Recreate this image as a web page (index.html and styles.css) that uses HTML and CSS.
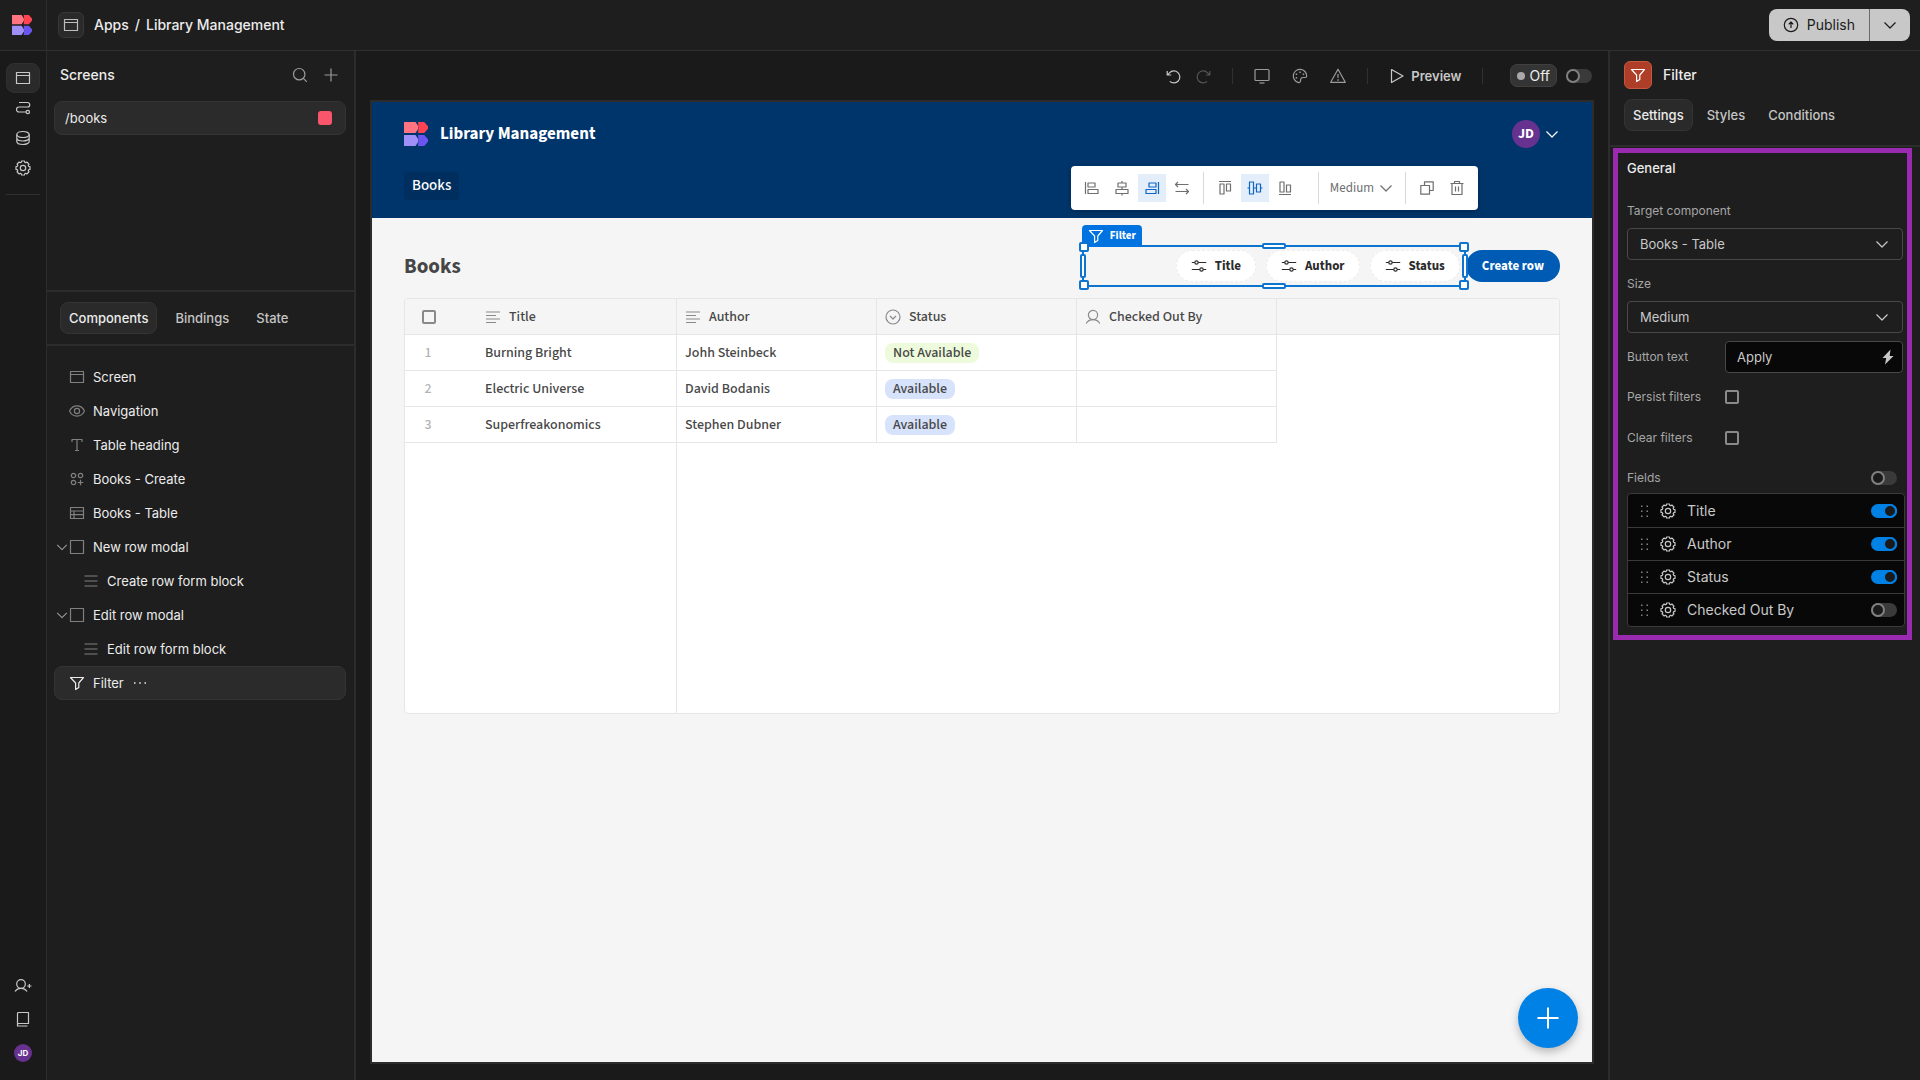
FILE: index.html
```html
<!DOCTYPE html>
<html lang="en">
<head>
    <meta charset="UTF-8">
    <meta name="viewport" content="width=device-width, initial-scale=1.0">
    <title>Library Management - Builder</title>
    <link rel="stylesheet" href="styles.css">
</head>
<body>
    <!-- icon sprite -->
    <svg class="sprite" aria-hidden="true">
        <symbol id="logo" viewBox="0 0 24 24">
            <path fill="#ff7480" d="M0 0h11.5l2.8 4.2v2.6L11.5 11H0z"/>
            <path fill="#ff4350" d="M14 0h6.2L24 4.2v2.6L20.2 11H14l.6-5.5z"/>
            <path fill="#9f90f8" d="M0 13h11.5l2.8 4.2v2.6L11.5 24H0z"/>
            <path fill="#6a55f0" d="M14 13h6.2l3.8 4.2v2.6L20.2 24H14l.6-5.5z"/>
        </symbol>
        <symbol id="browser" viewBox="0 0 16 16"><path d="M1.5 2.5h13v11h-13zM1.5 5.5h13"/></symbol>
        <symbol id="path" viewBox="0 0 16 16"><circle cx="12.8" cy="12" r="1.7"/><path d="M11 12H4a2.3 2.3 0 0 1 0-5h8.5a2.2 2.2 0 0 0 0-4.5H4"/></symbol>
        <symbol id="database" viewBox="0 0 16 16"><ellipse cx="8" cy="4.5" rx="6.2" ry="3"/><path d="M1.8 4.500v7c0 1.700 2.800 3 6.200 3s6.200-1.300 6.200-3v-7M1.800 8c0 1.700 2.800 3 6.200 3s6.200-1.300 6.200-3"/></symbol>
        <symbol id="gear" viewBox="0 0 16 16"><circle cx="8" cy="8" r="2.7"/><path d="M15 6.5v3l-1.300.2-.5 1.100.8 1.100-2.100 2.100-1.100-.8-1.100.5-.2 1.300h-3l-.2-1.300-1.100-.5-1.100.8L2 11.900l.8-1.100-.5-1.100L1 9.500v-3l1.300-.2.500-1.100L2 4.100 4.100 2l1.100.8 1.100-.5L6.500 1h3l.2 1.300 1.100.5 1.100-.8L14 4.100l-.8 1.100.5 1.100z"/></symbol>
        <symbol id="search" viewBox="0 0 16 16"><circle cx="7.2" cy="7.2" r="5.7"/><path d="m11.3 11.3 3.500 3.500"/></symbol>
        <symbol id="plus" viewBox="0 0 16 16"><path d="M8 1.500v13M1.500 8h13"/></symbol>
        <symbol id="eye" viewBox="0 0 16 16"><path d="M.5 8S3 2.800 8 2.800 15.500 8 15.500 8 13 13.200 8 13.200.5 8 .5 8z"/><circle cx="8" cy="8" r="2.6"/></symbol>
        <symbol id="text" viewBox="0 0 16 16"><path d="M3 5V2.500h10V5M8 2.500v11M6 13.500h4"/></symbol>
        <symbol id="grid-plus" viewBox="0 0 16 16"><circle cx="4.5" cy="4.5" r="2.2"/><circle cx="11.5" cy="4.5" r="2.2"/><circle cx="4.5" cy="11.5" r="2.2"/><path d="M11.500 8.700v5.600M8.700 11.500h5.600"/></symbol>
        <symbol id="table" viewBox="0 0 16 16"><path d="M1.500 2.500h13v11h-13zM1.500 6h13M1.500 9.700h13M5 6v7.500"/></symbol>
        <symbol id="square" viewBox="0 0 16 16"><path d="M1.500 1.500h13v13h-13z"/></symbol>
        <symbol id="list" viewBox="0 0 16 16"><path d="M1.500 3h13M1.500 8h13M1.500 13h13"/></symbol>
        <symbol id="funnel" viewBox="0 0 16 16"><path d="M1.500 2.500h13L9.800 8v4.500l-3.200 2V8z"/></symbol>
        <symbol id="chevron" viewBox="0 0 16 16"><path d="m2.500 5.500 5.500 5.500 5.500-5.500"/></symbol>
        <symbol id="dots" viewBox="0 0 16 16"><path class="solid" d="M2 7.300h1.500v1.500H2zM7.300 7.300h1.500v1.500H7.300zM12.500 7.300H14v1.500h-1.500z"/></symbol>
        <symbol id="user-plus" viewBox="0 0 18 16"><circle cx="7" cy="6" r="4.3"/><path d="M1 13.500c1.200-2 3.400-3.200 6-3.200s4.800 1.200 6 3.200M13.300 8h4.200M15.400 5.900v4.200"/></symbol>
        <symbol id="user" viewBox="0 0 16 16"><circle cx="8" cy="6" r="4.6"/><path d="M1.200 14.500c1.200-2.400 3.800-3.900 6.800-3.900s5.600 1.500 6.800 3.900"/></symbol>
        <symbol id="book" viewBox="0 0 16 16"><path d="M2.500 14V2.500a1 1 0 0 1 1-1h10v11h-10a1 1 0 0 0-1 1v1.500h10"/></symbol>
        <symbol id="publish" viewBox="0 0 16 16"><circle cx="8" cy="8" r="6.7"/><path d="M8 11V5.200M5.700 7.300 8 5l2.300 2.300"/></symbol>
        <symbol id="undo" viewBox="0 0 16 16"><path d="M1.200 3v4h4M1.500 6.800l2-2a6 6 0 1 1 .3 8.600"/></symbol>
        <symbol id="redo" viewBox="0 0 16 16"><path d="M14.800 3v4h-4M14.500 6.800l-2-2a6 6 0 1 0-.3 8.600"/></symbol>
        <symbol id="monitor" viewBox="0 0 16 16"><rect x="1" y="1.5" width="14" height="11" rx="1"/><path d="M5.500 15h5"/></symbol>
        <symbol id="palette" viewBox="0 0 16 16"><path d="M9 10.500c.5-.8 1.400-1 2.500-1h1.800c1 0 1.400-.7 1.400-1.500A6.700 6.700 0 1 0 6 14.400c1.500.5 2.600-.4 2.600-1.600 0-.9 0-1.600.4-2.300z"/><path class="solid" d="M7.300 3.500h1.500V5H7.300zM3.700 5.500h1.500V7H3.700zM3.700 9h1.500v1.500H3.700zM10.700 5.500h1.500V7h-1.500z"/></symbol>
        <symbol id="warning" viewBox="0 0 16 16"><path d="M8 1.200 15.300 14.300H.7zM8 6v4"/><path class="solid" d="M7.300 11.300h1.500v1.400H7.300z"/></symbol>
        <symbol id="play" viewBox="0 0 16 16"><path d="M2.500 1.500 14 8 2.500 14.500z"/></symbol>
        <symbol id="h-left" viewBox="0 0 16 16"><path d="M1.500 2v12M4 3h7v4H4zM4 9.500h10v4H4z"/></symbol>
        <symbol id="h-center" viewBox="0 0 16 16"><path d="M8 1v2M8 7v2.500M8 13.500v2M4 3h8v4H4zM2 9.500h12v4H2z"/></symbol>
        <symbol id="h-right" viewBox="0 0 16 16"><path d="M14.500 2v12M5 3h7v4H5zM2 9.500h10v4H2z"/></symbol>
        <symbol id="swap" viewBox="0 0 16 16"><path d="M14.500 4.500h-13M4 2 1.500 4.500 4 7M1.500 11.500h13M12 9l2.500 2.500L12 14"/></symbol>
        <symbol id="v-top" viewBox="0 0 16 16"><path d="M2 1.500h12M3 4h4v10H3zM9.500 4h4v7h-4z"/></symbol>
        <symbol id="v-center" viewBox="0 0 16 16"><path d="M.5 8H2M6.500 8H9M14 8h1.500M2.500 2h4v12h-4zM9.500 4h4v8h-4z"/></symbol>
        <symbol id="v-bottom" viewBox="0 0 16 16"><path d="M2 14.500h12M3 2h4v10H3zM9.500 5h4v7h-4z"/></symbol>
        <symbol id="copy" viewBox="0 0 16 16"><path d="M5.500 5V1.800h8.700v8.700H10.500M1.800 5.500h8.700v8.700H1.800z"/></symbol>
        <symbol id="trash" viewBox="0 0 16 16"><path d="M1.500 3.500h13M3 3.500v11h10v-11M5.500 3.500v-2h5v2M6.500 6.500v5M9.500 6.500v5"/></symbol>
        <symbol id="sliders" viewBox="0 0 16 16"><circle cx="5.5" cy="4.5" r="1.7"/><circle cx="10.5" cy="11.5" r="1.7"/><path d="M.8 4.500h3M7.200 4.500h8M.8 11.500h8M12.200 11.500h3"/></symbol>
        <symbol id="align-left" viewBox="0 0 16 16"><path d="M1 3h14M1 6.500h10M1 10h14M1 13.500h10"/></symbol>
        <symbol id="circle-down" viewBox="0 0 16 16"><circle cx="8" cy="8" r="7"/><path d="M5 7l3 3 3-3"/></symbol>
        <symbol id="bolt" viewBox="0 0 16 16"><path class="solid" d="M10.500.5 2.500 9h3.700L5 15.500 13.500 7H9.700z"/></symbol>
        <symbol id="grip" viewBox="0 0 10 14"><path class="solid" d="M1 1.500h1.500V3H1zM6.500 1.500H8V3H6.500zM1 6.500h1.500V8H1zM6.500 6.500H8V8H6.500zM1 11.500h1.500V13H1zM6.500 11.500H8V13H6.500z"/></symbol>
    </svg>

    <div class="builder">
        <header class="topbar">
            <a class="topbar-logo" href="#" aria-label="Home"><svg class="logo-sm"><use href="#logo"/></svg></a>
            <span class="app-icon"><svg class="icon"><use href="#browser"/></svg></span>
            <nav class="breadcrumbs">
                <a href="#">Apps</a>
                <span>/</span>
                <a href="#">Library Management</a>
            </nav>
            <div class="publish">
                <button type="button" class="publish-main"><svg class="icon"><use href="#publish"/></svg>Publish</button>
                <button type="button" class="publish-more" aria-label="Publish options"><svg class="icon"><use href="#chevron"/></svg></button>
            </div>
        </header>

        <nav class="rail">
            <a class="rail-link active" href="#" aria-label="Design"><svg class="icon"><use href="#browser"/></svg></a>
            <a class="rail-link" href="#" aria-label="Automations"><svg class="icon"><use href="#path"/></svg></a>
            <a class="rail-link" href="#" aria-label="Data"><svg class="icon"><use href="#database"/></svg></a>
            <a class="rail-link" href="#" aria-label="Settings"><svg class="icon"><use href="#gear"/></svg></a>
            <hr>
            <div class="rail-bottom">
                <a href="#" aria-label="Invite"><svg class="icon icon-wide"><use href="#user-plus"/></svg></a>
                <a href="#" aria-label="Docs"><svg class="icon"><use href="#book"/></svg></a>
                <span class="avatar avatar-sm">JD</span>
            </div>
        </nav>

        <aside class="left-panel">
            <section class="screens">
                <div class="screens-head">
                    <h2>Screens</h2>
                    <button type="button" aria-label="Search"><svg class="icon"><use href="#search"/></svg></button>
                    <button type="button" aria-label="Add screen"><svg class="icon"><use href="#plus"/></svg></button>
                </div>
                <a class="screen-row" href="#">/books<span class="role"></span></a>
            </section>
            <div class="tabs left-tabs">
                <button type="button" class="tab active">Components</button>
                <button type="button" class="tab">Bindings</button>
                <button type="button" class="tab">State</button>
            </div>
            <ul class="tree">
                <li><svg class="icon"><use href="#browser"/></svg>Screen</li>
                <li><svg class="icon"><use href="#eye"/></svg>Navigation</li>
                <li><svg class="icon"><use href="#text"/></svg>Table heading</li>
                <li><svg class="icon"><use href="#grid-plus"/></svg>Books - Create</li>
                <li><svg class="icon"><use href="#table"/></svg>Books - Table</li>
                <li class="parent"><svg class="icon caret"><use href="#chevron"/></svg><svg class="icon"><use href="#square"/></svg>New row modal</li>
                <li class="child"><svg class="icon"><use href="#list"/></svg>Create row form block</li>
                <li class="parent"><svg class="icon caret"><use href="#chevron"/></svg><svg class="icon"><use href="#square"/></svg>Edit row modal</li>
                <li class="child"><svg class="icon"><use href="#list"/></svg>Edit row form block</li>
                <li class="selected"><svg class="icon"><use href="#funnel"/></svg>Filter<svg class="icon"><use href="#dots"/></svg></li>
            </ul>
        </aside>

        <main class="stage">
            <div class="stage-bar">
                <button type="button" class="bright" aria-label="Undo"><svg class="icon"><use href="#undo"/></svg></button>
                <button type="button" class="dim" aria-label="Redo"><svg class="icon"><use href="#redo"/></svg></button>
                <span class="sep"></span>
                <button type="button" class="device" aria-label="Device"><svg class="icon"><use href="#monitor"/></svg></button>
                <button type="button" class="device" aria-label="Theme"><svg class="icon"><use href="#palette"/></svg></button>
                <button type="button" class="device" aria-label="Errors"><svg class="icon"><use href="#warning"/></svg></button>
                <span class="sep"></span>
                <button type="button" class="preview"><svg class="icon"><use href="#play"/></svg>Preview</button>
                <span class="sep"></span>
                <label class="off-badge" for="live">Off</label>
                <input type="checkbox" class="switch" id="live">
            </div>

            <div class="canvas">
                <header class="app-nav">
                    <div class="app-brand">
                        <svg class="logo-lg"><use href="#logo"/></svg>
                        <h1>Library Management</h1>
                        <span class="avatar">JD</span>
                        <svg class="icon"><use href="#chevron"/></svg>
                    </div>
                    <a class="app-link" href="#">Books</a>
                </header>

                <div class="app-body">
                    <div class="heading-row">
                        <h2>Books</h2>
                        <div class="filter-block">
                            <button type="button" class="pill"><svg class="icon"><use href="#sliders"/></svg>Title</button>
                            <button type="button" class="pill"><svg class="icon"><use href="#sliders"/></svg>Author</button>
                            <button type="button" class="pill"><svg class="icon"><use href="#sliders"/></svg>Status</button>
                            <!-- selection overlay -->
                            <div class="selection">
                                <span class="selection-tag"><svg class="icon"><use href="#funnel"/></svg>Filter</span>
                                <i class="corner top left"></i><i class="corner top right"></i>
                                <i class="corner bottom left"></i><i class="corner bottom right"></i>
                                <i class="bar-h top"></i><i class="bar-h bottom"></i>
                                <i class="bar-v left"></i><i class="bar-v right"></i>
                            </div>
                        </div>
                        <button type="button" class="create-row">Create row</button>
                    </div>

                    <div class="grid-wrap">
                        <table class="grid">
                            <colgroup><col class="col-num"><col class="col-data"><col class="col-data"><col class="col-data"><col class="col-data"><col></colgroup>
                            <thead>
                                <tr>
                                    <th class="num"><input type="checkbox" class="check" aria-label="Select all"></th>
                                    <th><span class="th"><svg class="icon"><use href="#align-left"/></svg>Title</span></th>
                                    <th><span class="th"><svg class="icon"><use href="#align-left"/></svg>Author</span></th>
                                    <th><span class="th"><svg class="icon"><use href="#circle-down"/></svg>Status</span></th>
                                    <th><span class="th"><svg class="icon"><use href="#user"/></svg>Checked Out By</span></th>
                                    <th></th>
                                </tr>
                            </thead>
                            <tbody>
                                <tr><td class="num">1</td><td>Burning Bright</td><td>Johh Steinbeck</td><td><span class="status green">Not Available</span></td><td></td><td class="rest"></td></tr>
                                <tr><td class="num">2</td><td>Electric Universe</td><td>David Bodanis</td><td><span class="status blue">Available</span></td><td></td><td class="rest"></td></tr>
                                <tr><td class="num">3</td><td>Superfreakonomics</td><td>Stephen Dubner</td><td><span class="status blue">Available</span></td><td></td><td class="rest"></td></tr>
                                <tr class="filler"><td></td><td class="line"></td><td colspan="4"></td></tr>
                            </tbody>
                        </table>
                    </div>
                </div>

                <div class="float-bar">
                    <div class="group">
                        <button type="button" aria-label="Align left"><svg class="icon"><use href="#h-left"/></svg></button>
                        <button type="button" aria-label="Align center"><svg class="icon"><use href="#h-center"/></svg></button>
                        <button type="button" class="on" aria-label="Align right"><svg class="icon"><use href="#h-right"/></svg></button>
                        <button type="button" aria-label="Stretch"><svg class="icon"><use href="#swap"/></svg></button>
                    </div>
                    <div class="group group-vertical">
                        <button type="button" aria-label="Align top"><svg class="icon"><use href="#v-top"/></svg></button>
                        <button type="button" class="on" aria-label="Align middle"><svg class="icon"><use href="#v-center"/></svg></button>
                        <button type="button" aria-label="Align bottom"><svg class="icon"><use href="#v-bottom"/></svg></button>
                    </div>
                    <div class="group">
                        <button type="button" class="size">Medium<svg class="icon"><use href="#chevron"/></svg></button>
                    </div>
                    <div class="group">
                        <button type="button" aria-label="Duplicate"><svg class="icon"><use href="#copy"/></svg></button>
                        <button type="button" aria-label="Delete"><svg class="icon"><use href="#trash"/></svg></button>
                    </div>
                </div>
                <button type="button" class="fab" aria-label="Add component"><svg class="icon"><use href="#plus"/></svg></button>
            </div>
        </main>

        <aside class="right-panel">
            <div class="panel-title">
                <span class="panel-icon"><svg class="icon"><use href="#funnel"/></svg></span>
                <h2>Filter</h2>
            </div>
            <div class="tabs right-tabs">
                <button type="button" class="tab active">Settings</button>
                <button type="button" class="tab">Styles</button>
                <button type="button" class="tab">Conditions</button>
            </div>

            <form class="settings">
                <h3>General</h3>
                <label for="target">Target component</label>
                <div class="select">
                    <select id="target"><option>Books - Table</option></select>
                    <svg class="icon"><use href="#chevron"/></svg>
                </div>
                <label for="size">Size</label>
                <div class="select">
                    <select id="size"><option>Medium</option></select>
                    <svg class="icon"><use href="#chevron"/></svg>
                </div>
                <div class="prop prop-text">
                    <label for="button-text">Button text</label>
                    <div class="text-field">
                        <input type="text" id="button-text" value="Apply">
                        <svg class="icon"><use href="#bolt"/></svg>
                    </div>
                </div>
                <div class="prop">
                    <label for="persist">Persist filters</label>
                    <input type="checkbox" class="check" id="persist">
                </div>
                <div class="prop">
                    <label for="clear">Clear filters</label>
                    <input type="checkbox" class="check" id="clear">
                </div>
                <div class="fields-head">
                    <label for="all-fields">Fields</label>
                    <input type="checkbox" class="switch" id="all-fields">
                </div>
                <ul class="fields">
                    <li><svg class="grip"><use href="#grip"/></svg><svg class="icon"><use href="#gear"/></svg><label for="f-title">Title</label><input type="checkbox" class="switch" id="f-title" checked></li>
                    <li><svg class="grip"><use href="#grip"/></svg><svg class="icon"><use href="#gear"/></svg><label for="f-author">Author</label><input type="checkbox" class="switch" id="f-author" checked></li>
                    <li><svg class="grip"><use href="#grip"/></svg><svg class="icon"><use href="#gear"/></svg><label for="f-status">Status</label><input type="checkbox" class="switch" id="f-status" checked></li>
                    <li><svg class="grip"><use href="#grip"/></svg><svg class="icon"><use href="#gear"/></svg><label for="f-checked">Checked Out By</label><input type="checkbox" class="switch" id="f-checked"></li>
                </ul>
            </form>
        </aside>
    </div>
</body>
</html>
```

FILE: styles.css
```css
*, *::before {
    margin: 0;
    padding: 0;
    box-sizing: border-box;
}
body {
    background-color: #1e1e1e;
    color: #ececec;
    font-family: Inter, sans-serif;
    font-size: 13px;
    line-height: 16px;
}
button, input, select {
    font: inherit;
    color: inherit;
    background: none;
    border: none;
}
button {
    cursor: pointer;
}
a {
    color: inherit;
    text-decoration: none;
}
ul {
    list-style: none;
}
.sprite {
    display: none;
}
.icon {
    display: block;
    flex: none;
    width: 16px;
    height: 16px;
    fill: none;
    stroke: currentColor;
    stroke-width: 1.2;
    stroke-linejoin: round;
}
.solid {
    fill: currentColor;
    stroke: none;
}
.builder {
    display: grid;
    grid-template-columns: 47px 309px 1fr 312px;
    grid-template-rows: 51px 1fr;
    height: 100vh;
}

/* top bar */
.topbar {
    grid-column: 1 / -1;
    display: flex;
    align-items: center;
    border-bottom: 1px solid #303030;
    padding-right: 10px;
}
.topbar-logo {
    width: 47px;
    height: 50px;
    display: flex;
    align-items: center;
    padding-left: 12px;
    border-right: 1px solid #2c2c2c;
}
.logo-sm {
    width: 20px;
    height: 20px;
}
.app-icon {
    display: flex;
    align-items: center;
    justify-content: center;
    width: 26px;
    height: 26px;
    margin: 0 10px 0 11px;
    background-color: #2a2a2a;
    border: 1px solid #383838;
    border-radius: 6px;
    color: #bdbdbd;
}
.breadcrumbs {
    display: flex;
    gap: 6px;
    flex: 1;
    font-size: 14px;
    font-weight: 500;
}
.publish {
    display: flex;
    height: 32px;
    background-color: #c8c8c8;
    border-radius: 8px;
    color: #1b1b1b;
    font-size: 14px;
}
.publish-main {
    display: flex;
    align-items: center;
    gap: 8px;
    padding: 0 14px;
    border-right: 1px solid #6a6a6a;
}
.publish-more {
    padding: 0 12px;
}

/* icon rail */
.rail {
    display: flex;
    flex-direction: column;
    align-items: center;
    padding: 12px 0 18px;
    background-color: #1a1a1a;
    border-right: 1px solid #2c2c2c;
    color: #c8c8c8;
}
.rail-link {
    display: flex;
    align-items: center;
    justify-content: center;
    width: 34px;
    height: 30px;
}
.rail-link.active {
    background-color: #2a2a2a;
    border: 1px solid #303030;
    border-radius: 8px;
}
.rail hr {
    width: 34px;
    margin-top: 11px;
    border: none;
    border-top: 1px solid #303030;
}
.rail-bottom {
    display: flex;
    flex-direction: column;
    align-items: center;
    gap: 17px;
    margin-top: auto;
}
.icon-wide {
    width: 18px;
}
.avatar {
    display: flex;
    align-items: center;
    justify-content: center;
    width: 28px;
    height: 28px;
    border-radius: 50%;
    background-color: #67328f;
    color: white;
    font-size: 14px;
    font-weight: 700;
}
.avatar-sm {
    width: 18px;
    height: 18px;
    font-size: 8px;
}

/* left panel */
.left-panel {
    border-right: 2px solid #2c2c2c;
}
.screens {
    height: 241px;
    padding: 12px 8px 0 7px;
    border-bottom: 2px solid #2c2c2c;
}
.screens-head {
    display: flex;
    align-items: center;
    gap: 15px;
    padding: 0 7px 0 6px;
    height: 24px;
    color: #9a9a9a;
}
.screens-head h2 {
    flex: 1;
    color: #ececec;
    font-size: 14px;
    font-weight: 500;
}
.screen-row {
    display: flex;
    align-items: center;
    justify-content: space-between;
    height: 34px;
    margin-top: 14px;
    padding: 0 13px 0 10px;
    background-color: #2b2b2b;
    border: 1px solid #343434;
    border-radius: 8px;
}
.role {
    width: 14px;
    height: 14px;
    border-radius: 3px;
    background-color: #f9566b;
}
.tabs {
    display: flex;
    gap: 8px;
    border-bottom: 2px solid #2c2c2c;
}
.tab {
    height: 32px;
    padding: 0 8px;
    border: 1px solid transparent;
    border-radius: 8px;
    color: #c4c4c4;
    font-weight: 500;
}
.tab.active {
    background-color: #2a2a2a;
    border-color: #343434;
    color: #ececec;
}
.left-tabs {
    gap: 9px;
    padding: 10px 13px;
}
.tree {
    padding: 14px 8px 0 7px;
}
.tree li {
    display: flex;
    align-items: center;
    gap: 8px;
    height: 34px;
    padding-left: 14px;
    border: 1px solid transparent;
    border-radius: 8px;
}
.tree .icon {
    color: #808080;
}
.tree .parent {
    gap: 0;
    padding-left: 0;
}
.tree .parent .icon {
    margin-right: 8px;
}
.tree .parent .caret {
    margin: 0;
    width: 14px;
    color: #9a9a9a;
}
.tree .child {
    padding-left: 28px;
}
.tree .selected {
    background-color: #2b2b2b;
    border-color: #343434;
}
.tree .selected .icon {
    color: #ececec;
}

/* stage */
.stage {
    display: flex;
    flex-direction: column;
    min-width: 0;
    padding: 0 14px 16px;
    background-color: #1a1a1a;
}
.stage-bar {
    display: flex;
    align-items: center;
    justify-content: flex-end;
    height: 49px;
    padding-right: 2px;
    color: #9a9a9a;
}
.stage-bar .bright {
    color: #c8c8c8;
}
.stage-bar .dim {
    margin-left: 13px;
    color: #555;
}
.sep {
    width: 1px;
    height: 16px;
    margin: 0 21px;
    background-color: #303030;
}
.device + .device {
    margin-left: 22px;
}
.preview {
    display: flex;
    align-items: center;
    gap: 6px;
    color: #c8c8c8;
    font-weight: 600;
}
.off-badge {
    display: flex;
    align-items: center;
    gap: 4px;
    height: 23px;
    margin: 0 9px 0 6px;
    padding: 0 6px;
    background-color: #343434;
    border: 1px solid #404040;
    border-radius: 7px;
    color: #ececec;
    font-size: 14px;
}
.off-badge::before {
    content: "";
    width: 8px;
    height: 8px;
    border-radius: 50%;
    background-color: #a8a8a8;
}
.switch {
    appearance: none;
    display: flex;
    width: 26px;
    height: 14px;
    border-radius: 7px;
    background-color: #3a3a3a;
}
.switch::before {
    content: "";
    width: 14px;
    height: 14px;
    border: 2px solid #808080;
    border-radius: 50%;
    background-color: #1a1a1a;
}
.switch:checked {
    background-color: #0081e6;
}
.switch:checked::before {
    margin-left: auto;
    border-color: #0081e6;
}
.check {
    appearance: none;
    display: block;
    width: 14px;
    height: 14px;
    border: 2px solid #8a8a8a;
    border-radius: 2px;
}

/* app canvas */
.canvas {
    position: relative;
    flex: 1;
    border: 2px solid #2c2c2c;
    background-color: #f5f5f5;
    color: #464646;
    font-family: "Source Sans 3", "Source Sans Pro", "Noto Sans CJK SC", sans-serif;
    font-weight: 500;
}
.app-nav {
    padding: 18px 32px;
    background-color: #00356b;
    color: white;
}
.app-brand {
    display: flex;
    align-items: center;
    height: 28px;
    margin-bottom: 24px;
}
.app-brand h1 {
    flex: 1;
    margin-left: 12px;
    font-size: 17px;
    font-weight: 700;
}
.app-brand .icon {
    margin-left: 4px;
}
.logo-lg {
    width: 24px;
    height: 24px;
}
.app-link {
    display: inline-block;
    padding: 6px 8px;
    border-radius: 4px;
    background-color: #002e5e;
    font-size: 15px;
}
.app-body {
    padding: 32px;
}
.heading-row {
    display: flex;
    align-items: center;
    height: 32px;
}
.heading-row h2 {
    flex: 1;
    font-size: 21px;
    font-weight: 700;
}
.filter-block {
    position: relative;
    display: flex;
    justify-content: flex-end;
    gap: 10px;
    width: 384px;
    padding: 0 6px;
}
.pill {
    display: flex;
    align-items: center;
    gap: 8px;
    height: 32px;
    padding: 0 14px;
    border: 1px dashed #ededed;
    border-radius: 16px;
    background-color: white;
    color: #2c2c2c;
    font-size: 13px;
    font-weight: 700;
}
.create-row {
    height: 32px;
    padding: 0 16px;
    border-radius: 16px;
    background-color: #005bb5;
    color: white;
    font-size: 13px;
    font-weight: 700;
}
.selection {
    position: absolute;
    inset: -5px 0;
    border: 2px solid #0d74cf;
    pointer-events: none;
}
.selection-tag {
    position: absolute;
    left: -2px;
    bottom: 100%;
    display: flex;
    align-items: center;
    gap: 6px;
    height: 22px;
    padding: 0 6px;
    border-radius: 4px 4px 0 0;
    background-color: #0073e0;
    color: white;
    font-size: 11px;
    font-weight: 700;
}
.corner, .bar-h, .bar-v {
    position: absolute;
    border: 2px solid #0d74cf;
    border-radius: 2px;
    background-color: white;
}
.corner {
    z-index: 1;
    width: 10px;
    height: 10px;
}
.corner.top {
    top: -5px;
}
.corner.bottom {
    bottom: -5px;
}
.corner.left {
    left: -5px;
}
.corner.right {
    right: -5px;
}
.bar-h {
    left: calc(50% - 12px);
    width: 24px;
    height: 6px;
}
.bar-h.top {
    top: -4px;
}
.bar-h.bottom {
    bottom: -4px;
}
.bar-v {
    top: calc(50% - 12px);
    width: 6px;
    height: 24px;
}
.bar-v.left {
    left: -4px;
}
.bar-v.right {
    right: -4px;
}

/* data grid */
.grid-wrap {
    margin-top: 16px;
    border: 1px solid #e6e6e6;
    border-radius: 4px;
    background-color: white;
    overflow: hidden;
}
.grid {
    width: 100%;
    height: 414px;
    table-layout: fixed;
    border-collapse: separate;
    border-spacing: 0;
    font-size: 14px;
}
.col-num {
    width: 72px;
}
.col-data {
    width: 200px;
}
.grid th, .grid td {
    height: 36px;
    padding: 0 8px;
    border-bottom: 1px solid #e6e6e6;
    border-right: 1px solid #e6e6e6;
    text-align: left;
    font-weight: 500;
}
.grid th {
    background-color: #f5f5f5;
}
.grid .num {
    padding-left: 17px;
    border-right: none;
}
.grid td.num {
    padding: 0 26px 0 0;
    text-align: center;
    color: #b3b3b3;
}
.grid th:last-child, .grid .rest {
    border-right: none;
}
.grid .rest {
    border-bottom: none;
}
.grid .filler td {
    height: auto;
    border: none;
}
.grid .filler .line {
    border-right: 1px solid #e6e6e6;
}
.th {
    display: flex;
    align-items: center;
    gap: 8px;
}
.th .icon {
    color: #8a8a8a;
}
.status {
    display: inline-block;
    padding: 2px 8px;
    border-radius: 8px;
}
.status.green {
    background-color: #edfbdc;
}
.status.blue {
    background-color: #d7e2fb;
}

/* floating component toolbar */
.float-bar {
    position: absolute;
    top: 64px;
    right: 114px;
    display: flex;
    align-items: center;
    height: 44px;
    padding: 6px 0;
    border-radius: 4px;
    background-color: white;
    color: #6e6e6e;
    box-shadow: 0 2px 6px rgba(0, 0, 0, 0.25);
}
.group {
    display: flex;
    align-items: center;
    gap: 2px;
    height: 32px;
    padding: 0 7px;
}
.group + .group {
    border-left: 1px solid #d8d8d8;
}
.group-vertical {
    padding-right: 19px;
}
.float-bar button {
    display: flex;
    align-items: center;
    justify-content: center;
    width: 28px;
    height: 28px;
}
.float-bar .on {
    background-color: #e4eefa;
    color: #0d66c2;
}
.float-bar .size {
    width: auto;
    gap: 4px;
    padding: 0 4px;
    font-size: 13px;
    font-weight: 400;
}
.fab {
    position: absolute;
    right: 14px;
    bottom: 14px;
    display: flex;
    align-items: center;
    justify-content: center;
    width: 60px;
    height: 60px;
    border-radius: 50%;
    background-color: #0081e6;
    color: white;
    box-shadow: 0 4px 8px rgba(0, 0, 0, 0.25);
}
.fab .icon {
    width: 26px;
    height: 26px;
}

/* right panel */
.right-panel {
    border-left: 2px solid #2c2c2c;
}
.panel-title {
    display: flex;
    align-items: center;
    gap: 11px;
    padding: 10px 14px;
}
.panel-title h2 {
    font-size: 14px;
    font-weight: 500;
}
.panel-icon {
    display: flex;
    align-items: center;
    justify-content: center;
    width: 28px;
    height: 28px;
    border: 1px solid #c4573f;
    border-radius: 6px;
    background-color: #ae3e28;
    color: white;
}
.right-tabs {
    gap: 5px;
    padding: 0 14px 14px;
}
.settings {
    margin: 1px 8px 0 3px;
    padding: 7px 2px 8px 9px;
    border: 5px solid #9a2bb0;
    color: #a6a6a6;
    font-size: 12px;
}
.settings h3 {
    margin-bottom: 27px;
    color: #ececec;
    font-size: 13px;
    font-weight: 500;
}
.settings > label {
    display: block;
    margin-bottom: 9px;
}
.select {
    display: grid;
    align-items: center;
    margin: 0 2px 16px 0;
    color: #c8c8c8;
    font-size: 13px;
}
.select select {
    grid-area: 1 / 1;
    appearance: none;
    height: 32px;
    padding: 0 12px;
    border: 1px solid #484848;
    border-radius: 4px;
}
.select .icon {
    grid-area: 1 / 1;
    justify-self: end;
    margin-right: 13px;
    pointer-events: none;
}
.prop {
    display: grid;
    grid-template-columns: 98px minmax(0, 1fr);
    align-items: center;
    height: 41px;
    margin-right: 2px;
}
.prop-text {
    height: 32px;
    margin-top: -8px;
    margin-bottom: 3px;
}
.text-field {
    display: flex;
    align-items: center;
    height: 32px;
    padding: 0 6px 0 11px;
    border: 1px solid #484848;
    border-radius: 4px;
    background-color: #080808;
    color: #c8c8c8;
    font-size: 13px;
}
.text-field input {
    flex: 1;
    min-width: 0;
}
.fields-head {
    display: flex;
    align-items: center;
    justify-content: space-between;
    height: 30px;
    margin-top: 5px;
    padding-right: 8px;
}
.fields {
    border: 1px solid #3a3a3a;
    border-radius: 4px;
    background-color: #080808;
    color: #c8c8c8;
    font-size: 14px;
}
.fields li {
    display: flex;
    align-items: center;
    height: 33px;
    padding: 0 7px 0 12px;
}
.fields li + li {
    border-top: 1px solid #3a3a3a;
}
.fields label {
    flex: 1;
    margin-left: 11px;
}
.grip {
    width: 10px;
    height: 14px;
    margin-right: 10px;
    color: #808080;
}
```
